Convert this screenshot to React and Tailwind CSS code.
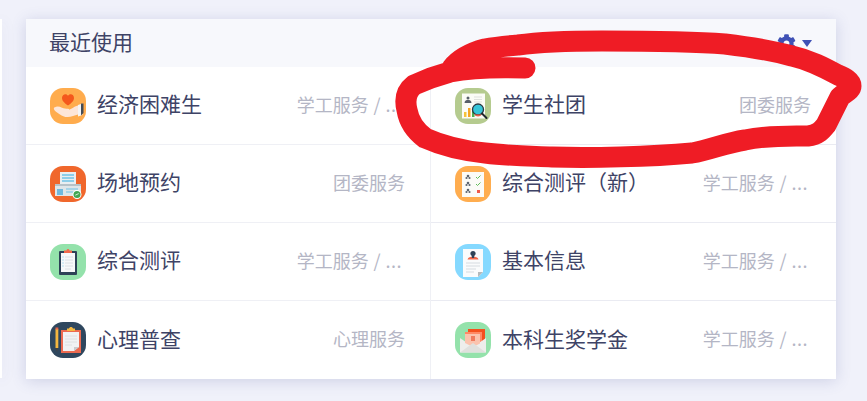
import React from 'react';
import { FaCog } from 'react-icons/fa';

// small app icons, drawn on a 36x36 box
const IconHeart = () => (
  <svg viewBox="0 0 36 36" className="w-9 h-9">
    <path d="M18 17.500c-3-2.200-6-4.600-6-7.600 0-2.200 1.700-3.700 3.400-3.700 1.200 0 2.100.6 2.600 1.600.5-1 1.500-1.600 2.700-1.600 1.800 0 3.300 1.500 3.300 3.700 0 3-3 5.400-6 7.600z" fill="#f4581c" />
    <path d="M4.500 19.500c2.500-1.600 5-1 7.500.3 2 .9 4 .9 6 .9 1.500 0 1.500 1.800 0 1.800h-3c2 .2 6-1 10-4l3-1v9l-5 1.500c-5 2-10 1-13-1.500-2-1.500-4-2.500-5.500-4.300-.6-.8-.8-1.400-.5-2.700z" fill="#fde6d8" />
    <path d="M28 17l4.500-1.500V27L28 28.500z" fill="#f5f5f5" />
    <path d="M31 15.500h2.500V25L31 27.500z" fill="#444b55" />
  </svg>
);

const IconVenue = () => (
  <svg viewBox="0 0 36 36" className="w-9 h-9">
    <rect x="10" y="6" width="16" height="21" fill="#e9eef1" />
    <path d="M12 9h12M12 12h12M12 15h12" stroke="#6fc3e6" strokeWidth="1.300" />
    <rect x="5" y="19" width="26" height="11" fill="#dfe6e9" />
    <rect x="5" y="18" width="26" height="2" fill="#b6c2c8" />
    <rect x="7" y="23" width="6" height="6" fill="#6fb9de" />
    <path d="M16 23h12M16 26h8" stroke="#6fc3e6" strokeWidth="1" />
    <circle cx="27" cy="28.500" r="4.500" fill="#fff" />
    <circle cx="27" cy="28.500" r="3.500" fill="#43a652" />
    <path d="M25.300 29.200l3.400-1.600" stroke="#fff" strokeWidth="0.800" />
  </svg>
);

const IconClipboard = () => (
  <svg viewBox="0 0 36 36" className="w-9 h-9">
    <rect x="9" y="7" width="18" height="24" rx="1" fill="#2e4257" />
    <rect x="11" y="9" width="14" height="19" fill="#f7f8f9" />
    <path d="M15 13h8M15 16h8M15 19h8M15 22h8M15 25h6" stroke="#d8dde0" strokeWidth="0.900" />
    <path d="M12.500 13h1M12.500 16h1M12.500 19h1M12.500 22h1" stroke="#71c6ec" strokeWidth="1" />
    <path d="M14 9V6.500h2.500C17 4.500 19 4.500 19.500 6.500H22V9z" fill="#f2684a" />
  </svg>
);

const IconSurvey = () => (
  <svg viewBox="0 0 36 36" className="w-9 h-9">
    <rect x="5.500" y="7" width="2.800" height="19" fill="#f4b73f" />
    <path d="M5.500 26h2.800l-1.400 4z" fill="#444" />
    <rect x="5.500" y="5.500" width="2.800" height="2" fill="#e8604a" />
    <rect x="11" y="8" width="20" height="23" fill="#ec6a50" />
    <path d="M13 10h16v15l-5 4H13z" fill="#f1f2f3" />
    <path d="M24 29v-4h5z" fill="#c8cbce" />
    <path d="M15 14h12M15 17h12M15 20h12M15 23h7" stroke="#dcdfe1" strokeWidth="0.900" />
    <path d="M17 9V6.500h2c.5-2 3.500-2 4 0h2V9z" fill="#f4b73f" />
  </svg>
);

const IconClub = () => (
  <svg viewBox="0 0 36 36" className="w-9 h-9">
    <rect x="7" y="5.500" width="23" height="25" fill="#fbfcf6" />
    <circle cx="13" cy="10" r="1.500" fill="#586069" />
    <path d="M9.500 15c0-2.500 2-3 3.500-3s3.500.5 3.500 3z" fill="#586069" />
    <path d="M19 9h8M19 11.500h8M19 14h8" stroke="#dfe1dd" strokeWidth="1" />
    <rect x="9" y="24" width="2.500" height="5" fill="#f5c33b" />
    <rect x="13" y="20" width="2.500" height="9" fill="#f5a623" />
    <rect x="17" y="22" width="2.500" height="7" fill="#4caf50" />
    <circle cx="23" cy="21.500" r="5.500" fill="#36c5d8" stroke="#2b3a42" strokeWidth="1.300" />
    <path d="M19 26.500a5 5 0 008 0z" fill="#e8604a" />
    <path d="M27 25.500l4.500 4.500" stroke="#20282d" strokeWidth="2" strokeLinecap="round" />
  </svg>
);

const IconChecklist = () => (
  <svg viewBox="0 0 36 36" className="w-9 h-9">
    <rect x="7" y="6" width="22" height="25" fill="#fbfbf8" />
    {[11, 18, 25].map((y) => (
      <g key={y} fill="#5b6470">
        <circle cx="13" cy={y - 1} r="1.300" />
        <circle cx="11.500" cy={y + 1} r="1.100" />
        <circle cx="14.500" cy={y + 1} r="1.100" />
      </g>
    ))}
    <path d="M21 11l1.500 1.500 3-3M21 18l1.500 1.500 3-3" stroke="#62bd5a" strokeWidth="1" fill="none" />
    <rect x="22" y="24" width="3" height="3" fill="#f0594a" />
  </svg>
);

const IconProfile = () => (
  <svg viewBox="0 0 36 36" className="w-9 h-9">
    <path d="M8 5h20v23l-5 5H8z" fill="#fafbfc" />
    <path d="M23 33v-5h5z" fill="#b5b9bc" />
    <path d="M12.500 15.500c.6-2.300 3-2.700 5.500-2.700s5 .4 5.500 2.700z" fill="#f2684a" />
    <circle cx="18" cy="9.500" r="2.600" fill="#2e4257" />
    <rect x="16.800" y="11" width="2.400" height="3" fill="#2e4257" />
    <path d="M11 19h14M11 22h14M11 25h10M11 28h8" stroke="#d6dbe0" strokeWidth="1" />
  </svg>
);

const IconMail = () => (
  <svg viewBox="0 0 36 36" className="w-9 h-9">
    <rect x="13" y="7" width="17" height="14" fill="#f4511e" />
    <rect x="10" y="10" width="17" height="14" fill="#ff8a65" />
    <path d="M5 16l13 9 13-9v14.500H5z" fill="#eeeeec" />
    <path d="M10 12h15v9.500L18 25l-8-4z" fill="#fbc3ae" />
    <path d="M16 14h4v5h-4z" fill="#ef7b5e" />
    <path d="M5 30.500L18 21l13 9.500z" fill="#e0e0dd" />
  </svg>
);

const items = [
  { name: '经济困难生', tag: '学工服务', more: true, bg: 'bg-[#ffac4d]', Icon: IconHeart },
  { name: '学生社团', tag: '团委服务', bg: 'bg-[#b5cb8f]', Icon: IconClub },
  { name: '场地预约', tag: '团委服务', bg: 'bg-[#f0672c]', Icon: IconVenue },
  { name: '综合测评（新）', tag: '学工服务', more: true, bg: 'bg-[#ffad4f]', Icon: IconChecklist },
  { name: '综合测评', tag: '学工服务', more: true, bg: 'bg-[#94e2ab]', Icon: IconClipboard },
  { name: '基本信息', tag: '学工服务', more: true, bg: 'bg-[#85d9ff]', Icon: IconProfile },
  { name: '心理普查', tag: '心理服务', bg: 'bg-[#2f475e]', Icon: IconSurvey },
  { name: '本科生奖学金', tag: '学工服务', more: true, bg: 'bg-[#94e2ab]', Icon: IconMail },
];

const Row = ({ item, index }) => {
  const { name, tag, more, bg, Icon } = item;
  const isRight = index % 2 === 1;
  const isLast = index >= 6;
  return (
    <div
      className={`flex items-center h-[78px] pl-6 ${isRight ? 'pr-[25px]' : 'pr-[25px] border-r border-[#eff0f5]'} ${isLast ? '' : 'border-b border-[#eaebf2]'}`}
    >
      <div className={`w-9 h-9 rounded-[13px] overflow-hidden shrink-0 ${bg}`}>
        <Icon />
      </div>
      <span className="ml-[11px] mb-[3px] text-[21px] text-[#3e4366]">{name}</span>
      <span className={`ml-auto mb-[3px] text-[18px] text-[#b4b6c5] ${more ? 'mr-[3px]' : ''}`}>
        {tag}
        {more && <span className="tracking-[0.5px]"> / ...</span>}
      </span>
    </div>
  );
};

const App = () => {
  return (
    <main
      className="relative w-[867px] h-[401px] overflow-hidden bg-[#f0f1fa] pt-[19px] flex items-start"
      style={{ fontFamily: '"Noto Sans CJK SC", "Noto Sans", sans-serif' }}
    >
      {/* next panel peeking in on the left */}
      <div className="w-[2px] h-[359px] bg-white shadow-[0_2px_14px_rgba(70,80,150,0.18)]" />

      <section className="ml-6 w-[810px] h-[360px] bg-white shadow-[0_2px_14px_rgba(70,80,150,0.2)]">
        <header className="h-12 bg-[#f7f8fc] flex items-center justify-between pl-6 pr-6">
          <h2 className="-ml-px mb-[2px] text-[21px] font-normal text-[#3e4366]">最近使用</h2>
          <div className="flex items-center gap-[6px] text-[#3f51b5]">
            <FaCog className="w-[19px] h-[19px]" />
            <svg viewBox="0 0 10 7" className="w-[10px] h-[7px]">
              <path d="M0 0h10L5 7z" fill="currentColor" />
            </svg>
          </div>
        </header>
        <div className="grid grid-cols-[405px_405px]">
          {items.map((item, i) => (
            <Row key={item.name} item={item} index={i} />
          ))}
        </div>
      </section>

      {/* red marker scribble on top of the screenshot */}
      <svg viewBox="0 0 867 401" className="absolute left-0 top-0 w-[867px] h-[401px] pointer-events-none">
        <path
          d="M525 68C495 67 470 68 450 72C435 76 425 80 414 85C405 92 405 102 407 110C409 122 417 132 425 138C445 147 465 151 485 153C510 156 530 156 552 157C590 158 650 157 692 153C710 150 725 143 745 140C770 135 790 136 808 136C818 135 822 130 826 125L840 97C846 92 851 90 851 86C851 81 845 78 838 75C825 68 810 60 792 56C770 50 750 47 725 44C700 42 660 41 602 41C570 41 540 42 518 45C505 46 495 47 485 49C470 53 460 58 452 68"
          fill="none"
          stroke="#ef1c25"
          strokeWidth="21"
          strokeLinecap="round"
          strokeLinejoin="round"
        />
      </svg>
    </main>
  );
};

export default App;
